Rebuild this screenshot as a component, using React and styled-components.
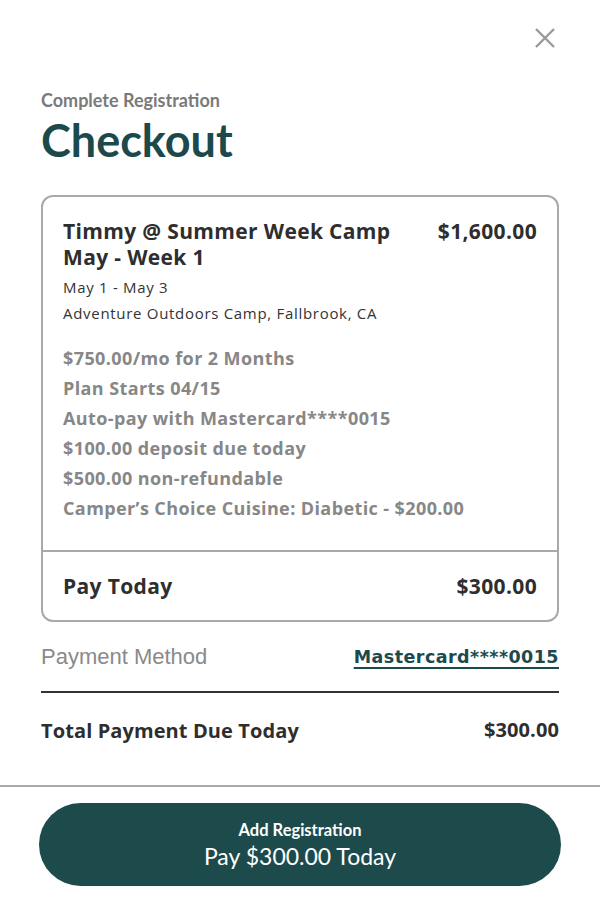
import React from "react";
import styled, { createGlobalStyle } from "styled-components";

const Global = createGlobalStyle`
  html, body { margin: 0; padding: 0; background: #fff; }
  body { font-family: "Open Sans", sans-serif; }
  * { box-sizing: border-box; }
`;

const Page = styled.div`
  width: 600px;
  height: 900px;
  display: flex;
  flex-direction: column;
  background: #fff;
`;

const Body = styled.div`
  padding: 0 41px;
  display: flex;
  flex-direction: column;
`;

const CloseRow = styled.div`
  display: flex;
  justify-content: flex-end;
  padding: 27px 3px 0 0;
  height: 90px;
`;

const CloseBtn = styled.button`
  border: none;
  background: none;
  padding: 0;
  width: 22px;
  height: 22px;
  cursor: pointer;
`;

const Eyebrow = styled.div`
  font-family: "Lato", sans-serif;
  font-weight: 700;
  font-size: 18px;
  line-height: 20px;
  color: #7a7a7a;
`;

const Title = styled.h1`
  margin: 2px 0 0;
  font-family: "Lato", sans-serif;
  font-weight: 700;
  font-size: 45px;
  line-height: 56px;
  color: #1c4a4c;
`;

const Card = styled.div`
  margin-top: 27px;
  border: 2px solid #a9a9a9;
  border-radius: 12px;
  display: flex;
  flex-direction: column;
`;

const CardTop = styled.div`
  padding: 21px 20px 27px 20px;
  border-bottom: 2px solid #a9a9a9;
`;

const TitleRow = styled.div`
  display: flex;
  justify-content: space-between;
  align-items: flex-start;
  gap: 20px;
`;

const ItemName = styled.div`
  font-weight: 700;
  font-size: 21px;
  line-height: 26px;
  letter-spacing: 0.35px;
  color: #2e2e2e;
  max-width: 350px;
`;

const Amount = styled.div`
  font-weight: 700;
  font-size: ${(p) => p.size || 21}px;
  letter-spacing: ${(p) => p.spacing ?? 0.35}px;
  color: #2e2e2e;
  line-height: 26px;
  white-space: nowrap;
`;

const Metas = styled.div`
  margin-top: 4px;
  display: flex;
  flex-direction: column;
`;

const Meta = styled.div`
  font-size: 15px;
  line-height: 26px;
  letter-spacing: 0.7px;
  color: #333;
`;

const Details = styled.div`
  margin-top: 17px;
  display: flex;
  flex-direction: column;
`;

const Detail = styled.div`
  font-weight: 700;
  font-size: 18px;
  line-height: 30px;
  letter-spacing: 0.4px;
  color: #878787;
`;

const CardBottom = styled.div`
  display: flex;
  justify-content: space-between;
  align-items: center;
  padding: 0 20px;
  height: 68px;
`;

const PayLabel = styled.div`
  font-weight: 700;
  font-size: 21px;
  letter-spacing: 0.35px;
  color: #2e2e2e;
`;

const MethodRow = styled.div`
  display: flex;
  justify-content: space-between;
  align-items: center;
  height: 71px;
  border-bottom: 2px solid #333;
`;

const MethodLabel = styled.div`
  font-family: "Liberation Sans", Arial, sans-serif;
  font-size: 22px;
  color: #8a8a8a;
`;

const MethodLink = styled.a`
  font-family: "DejaVu Sans", Verdana, sans-serif;
  font-weight: 700;
  font-size: 17.5px;
  color: #1c4a4c;
  text-decoration: underline;
  text-underline-offset: 4px;
  text-decoration-thickness: 2px;
  letter-spacing: 0.45px;
`;

const TotalRow = styled.div`
  display: flex;
  justify-content: space-between;
  align-items: center;
  height: 74px;
`;

const TotalLabel = styled.div`
  font-weight: 700;
  font-size: 20px;
  letter-spacing: 0.1px;
  color: #2e2e2e;
`;

const Footer = styled.div`
  margin-top: 18px;
  border-top: 2px solid #a9a9a9;
  padding: 16px 39px 0;
`;

const PayButton = styled.button`
  width: 100%;
  height: 83px;
  border: none;
  border-radius: 42px;
  background: #1d4b4c;
  color: #fff;
  font-family: "Lato", sans-serif;
  display: flex;
  flex-direction: column;
  align-items: center;
  justify-content: center;
  cursor: pointer;
`;

const BtnSmall = styled.span`
  font-weight: 700;
  font-size: 16.5px;
  line-height: 22px;
`;

const BtnBig = styled.span`
  font-weight: 400;
  font-size: 23px;
  line-height: 30px;
`;

export default function App() {
  const details = [
    "$750.00/mo for 2 Months",
    "Plan Starts 04/15",
    "Auto-pay with Mastercard****0015",
    "$100.00 deposit due today",
    "$500.00 non-refundable",
    "Camper’s Choice Cuisine: Diabetic - $200.00",
  ];
  return (
    <Page>
      <Global />
      <Body>
        <CloseRow>
          <CloseBtn aria-label="Close">
            <svg width="22" height="22" viewBox="0 0 22 22">
              <path d="M2 2 L20 20 M20 2 L2 20" stroke="#9a9a9a" strokeWidth="2.4" />
            </svg>
          </CloseBtn>
        </CloseRow>
        <Eyebrow>Complete Registration</Eyebrow>
        <Title>Checkout</Title>
        <Card>
          <CardTop>
            <TitleRow>
              <ItemName>Timmy @ Summer Week Camp May - Week 1</ItemName>
              <Amount>$1,600.00</Amount>
            </TitleRow>
            <Metas>
              <Meta>May 1 - May 3</Meta>
              <Meta>Adventure Outdoors Camp, Fallbrook, CA</Meta>
            </Metas>
            <Details>
              {details.map((d) => (
                <Detail key={d}>{d}</Detail>
              ))}
            </Details>
          </CardTop>
          <CardBottom>
            <PayLabel>Pay Today</PayLabel>
            <Amount>$300.00</Amount>
          </CardBottom>
        </Card>
        <MethodRow>
          <MethodLabel>Payment Method</MethodLabel>
          <MethodLink href="#">Mastercard****0015</MethodLink>
        </MethodRow>
        <TotalRow>
          <TotalLabel>Total Payment Due Today</TotalLabel>
          <Amount size={20} spacing={0.1}>$300.00</Amount>
        </TotalRow>
      </Body>
      <Footer>
        <PayButton>
          <BtnSmall>Add Registration</BtnSmall>
          <BtnBig>Pay $300.00 Today</BtnBig>
        </PayButton>
      </Footer>
    </Page>
  );
}
